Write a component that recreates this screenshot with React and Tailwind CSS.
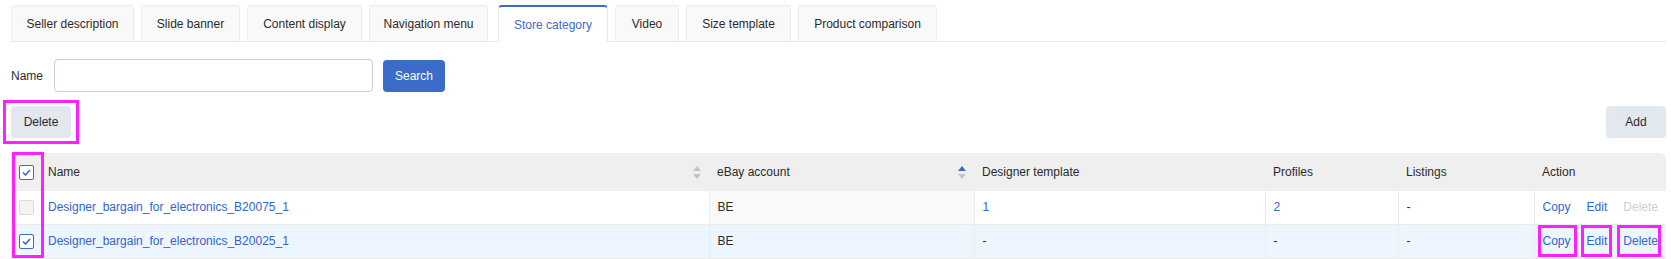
import React from 'react';

const tabs = [
  { label: 'Seller description', w: 'w-[123px]' },
  { label: 'Slide banner', w: 'w-[99px]' },
  { label: 'Content display', w: 'w-[115px]' },
  { label: 'Navigation menu', w: 'w-[119px]' },
  { label: 'Store category', w: 'w-[110px]', active: true },
  { label: 'Video', w: 'w-[64px]' },
  { label: 'Size template', w: 'w-[105px]' },
  { label: 'Product comparison', w: 'w-[139px]' },
];

const rows = [
  { name: 'Designer_bargain_for_electronics_B20075_1', account: 'BE', template: '1', profiles: '2', listings: '-', checked: false },
  { name: 'Designer_bargain_for_electronics_B20025_1', account: 'BE', template: '-', profiles: '-', listings: '-', checked: true },
];

function Mark({ className }) {
  return <span className={`pointer-events-none absolute border-[3px] border-[#ff1fff] ${className}`} />;
}

function SortIcon({ active }) {
  return (
    <svg width="8" height="13" viewBox="0 0 8 13" className="shrink-0">
      <path d="M4 0 L8 5 L0 5 Z" fill={active ? '#3b6cc8' : '#c4c4c4'} />
      <path d="M0 8 L8 8 L4 13 Z" fill="#c4c4c4" />
    </svg>
  );
}

function Checkbox({ checked, disabled }) {
  if (disabled) {
    return <span className="block w-[15px] h-[15px] rounded-[2px] border border-[#dcdcdc] bg-[#f3f3f3]" />;
  }
  return (
    <span className="flex items-center justify-center w-[15px] h-[15px] rounded-[2px] border border-[#3b6cc8] bg-white">
      {checked && (
        <svg width="9" height="7" viewBox="0 0 9 7">
          <path d="M1 3.5 L3.5 6 L8 1" fill="none" stroke="#3b6cc8" strokeWidth="1.6" />
        </svg>
      )}
    </span>
  );
}

export default function App() {
  return (
    <div className="w-[1671px] h-[259px] overflow-hidden bg-white pl-[11px] pr-[5px] pt-[5px] font-['Liberation_Sans',Arial,sans-serif] text-[12px] text-[#2b2b2b]">
      {/* tabs */}
      <div className="flex items-end gap-[7px] h-[37px] border-b border-[#e9e9e9]">
        {tabs.map((t) =>
          t.active ? (
            <div
              key={t.label}
              className={`${t.w} ml-[3px] h-[37px] -mb-px flex items-center justify-center rounded-t-[4px] border border-b-0 border-[#e9e9e9] border-t-2 border-t-[#3b6cc8] bg-white text-[#3b6cc8]`}
            >
              {t.label}
            </div>
          ) : (
            <div
              key={t.label}
              className={`${t.w} h-[36px] flex items-center justify-center rounded-t-[4px] border border-b-0 border-[#ececec] bg-[#f9f9f9]`}
            >
              {t.label}
            </div>
          )
        )}
      </div>

      {/* search */}
      <div className="mt-[17px] flex items-center h-[33px]">
        <span>Name</span>
        <input className="ml-[11px] w-[319px] h-[33px] rounded-[4px] border border-[#c9cdd5] bg-white px-2 outline-none" />
        <button className="ml-[10px] w-[62px] h-[32px] rounded-[4px] bg-[#3b6cc8] text-white">Search</button>
      </div>

      {/* toolbar */}
      <div className="mt-[14px] flex items-center justify-between">
        <div className="relative">
          <button className="w-[60px] h-[32px] rounded-[4px] bg-[#e3e7ee]">Delete</button>
          <Mark className="-left-[8px] -right-[8px] -top-[6px] -bottom-[6px]" />
        </div>
        <button className="w-[60px] h-[32px] rounded-[4px] bg-[#e3e7ee]">Add</button>
      </div>

      {/* table */}
      <div className="relative mt-[15px] w-[1655px] rounded-t-[6px] overflow-hidden">
        <table className="w-full table-fixed border-collapse">
          <colgroup>
            <col className="w-[29px]" />
            <col className="w-[669px]" />
            <col className="w-[265px]" />
            <col className="w-[291px]" />
            <col className="w-[133px]" />
            <col className="w-[136px]" />
            <col className="w-[132px]" />
          </colgroup>
          <thead>
            <tr className="h-[38px] bg-[#efefef] text-left">
              <th className="font-normal p-0">
                <div className="pl-[8px]">
                  <Checkbox checked />
                </div>
              </th>
              <th className="font-normal px-[8px]">
                <div className="flex items-center justify-between">
                  <span>Name</span>
                  <SortIcon />
                </div>
              </th>
              <th className="font-normal px-[8px]">
                <div className="flex items-center justify-between">
                  <span>eBay account</span>
                  <SortIcon active />
                </div>
              </th>
              <th className="font-normal px-[8px]">Designer template</th>
              <th className="font-normal px-[8px]">Profiles</th>
              <th className="font-normal px-[8px]">Listings</th>
              <th className="font-normal px-[8px]">Action</th>
            </tr>
          </thead>
          <tbody>
            {rows.map((r, i) => (
              <tr key={r.name} className={`border-b border-[#ececec] ${r.checked ? 'h-[34px] bg-[#edf5fe]' : 'h-[33px] bg-white'}`}>
                <td className="p-0">
                  <div className="pl-[8px]">
                    <Checkbox checked={r.checked} disabled={!r.checked} />
                  </div>
                </td>
                <td className="px-[8px] text-[#2f66c9]">{r.name}</td>
                <td className={`px-[8px] border-l border-[#ececec] ${r.checked ? '' : 'bg-[#fafafa]'}`}>{r.account}</td>
                <td className={`px-[8px] border-l border-[#ececec] ${r.template === '-' ? '' : 'text-[#2f66c9]'}`}>{r.template}</td>
                <td className={`px-[8px] border-l border-[#ececec] ${r.profiles === '-' ? '' : 'text-[#2f66c9]'}`}>{r.profiles}</td>
                <td className="px-[8px] border-l border-[#ececec]">{r.listings}</td>
                <td className="px-[8px] border-l border-[#ececec]">
                  <div className="flex items-center gap-[8px]">
                    <span className="relative text-[#2f66c9]">
                      Copy
                      {i === 1 && <Mark className="-left-[5px] -right-[6px] -top-[7px] -bottom-[7px]" />}
                    </span>
                    <span className="w-px h-[14px] bg-[#e3e3e3]" />
                    <span className="relative text-[#2f66c9]">
                      Edit
                      {i === 1 && <Mark className="-left-[6px] -right-[5px] -top-[7px] -bottom-[7px]" />}
                    </span>
                    <span className="w-px h-[14px] bg-[#e3e3e3]" />
                    <span className={`relative ${i === 1 ? 'text-[#2f66c9]' : 'text-[#cfcfcf]'}`}>
                      Delete
                      {i === 1 && <Mark className="-left-[6px] -right-[3px] -top-[7px] -bottom-[7px]" />}
                    </span>
                  </div>
                </td>
              </tr>
            ))}
          </tbody>
        </table>
      </div>
      {/* checkbox column marker */}
      <div className="relative">
        <Mark className="left-[1px] w-[32px] -top-[107px] h-[106px]" />
      </div>
    </div>
  );
}
